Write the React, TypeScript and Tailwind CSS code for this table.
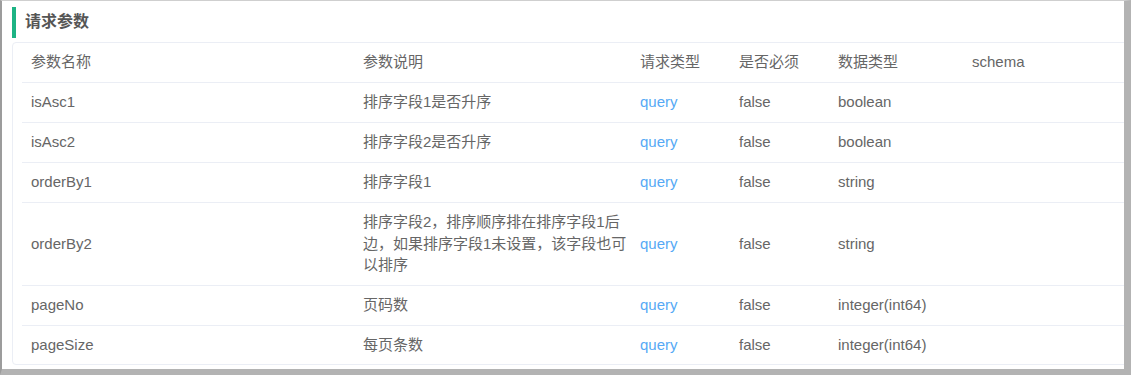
const cols = 'grid grid-cols-[332px_277px_99px_99px_134px_1fr] items-center'

type Param = {
  name: string
  desc: string
  inType: string
  required: string
  dataType: string
  schema?: string
}

const params: Param[] = [
  { name: 'isAsc1', desc: '排序字段1是否升序', inType: 'query', required: 'false', dataType: 'boolean' },
  { name: 'isAsc2', desc: '排序字段2是否升序', inType: 'query', required: 'false', dataType: 'boolean' },
  { name: 'orderBy1', desc: '排序字段1', inType: 'query', required: 'false', dataType: 'string' },
  {
    name: 'orderBy2',
    desc: '排序字段2，排序顺序排在排序字段1后边，如果排序字段1未设置，该字段也可以排序',
    inType: 'query',
    required: 'false',
    dataType: 'string',
  },
  { name: 'pageNo', desc: '页码数', inType: 'query', required: 'false', dataType: 'integer(int64)' },
  { name: 'pageSize', desc: '每页条数', inType: 'query', required: 'false', dataType: 'integer(int64)' },
]

const font = "font-['Liberation_Sans','Noto_Sans_CJK_SC',sans-serif]"

export default function App() {
  return (
    <div
      className={`w-[1131px] h-[375px] overflow-hidden bg-white border-l-2 border-t border-r-[7px] border-b-[6px] border-l-[#9c9c9c] border-t-[#cfcfcf] border-r-[#b3b3b3] border-b-[#b3b3b3] ${font}`}
    >
      {/* section title */}
      <div className="flex items-center h-[41px] pl-[10px] pt-[1px]">
        <div className="w-[4px] h-[31px] bg-[#1db384]" />
        <h3 className="ml-[9px] text-[16px] font-bold text-[#555] leading-[22px]">请求参数</h3>
      </div>

      {/* params table */}
      <div className="ml-[10px] w-[1125px] h-[323px] border border-[#ebeef5] rounded-[4px] pl-[9px] text-[15px] leading-[22px] text-[#666]">
        <div className={`${cols} h-[40px] pb-[1px] border-b border-[#ebeef5]`}>
          <div className="pl-[9px]">参数名称</div>
          <div className="pl-[9px]">参数说明</div>
          <div className="pl-[9px]">请求类型</div>
          <div className="pl-[9px]">是否必须</div>
          <div className="pl-[9px]">数据类型</div>
          <div className="pl-[9px]">schema</div>
        </div>

        {params.map((p, i) => (
          <div
            key={p.name}
            className={`${cols} pt-[8px] pb-[9px] ${i < params.length - 1 ? 'border-b border-[#ebeef5]' : ''}`}
          >
            <div className="pl-[9px]">{p.name}</div>
            <div className="pl-[9px] pr-[3px] leading-[21.7px]">{p.desc}</div>
            <div className="pl-[9px] text-[#56a9f5]">{p.inType}</div>
            <div className="pl-[9px]">{p.required}</div>
            <div className="pl-[9px]">{p.dataType}</div>
            <div className="pl-[9px]">{p.schema ?? ''}</div>
          </div>
        ))}
      </div>
    </div>
  )
}
